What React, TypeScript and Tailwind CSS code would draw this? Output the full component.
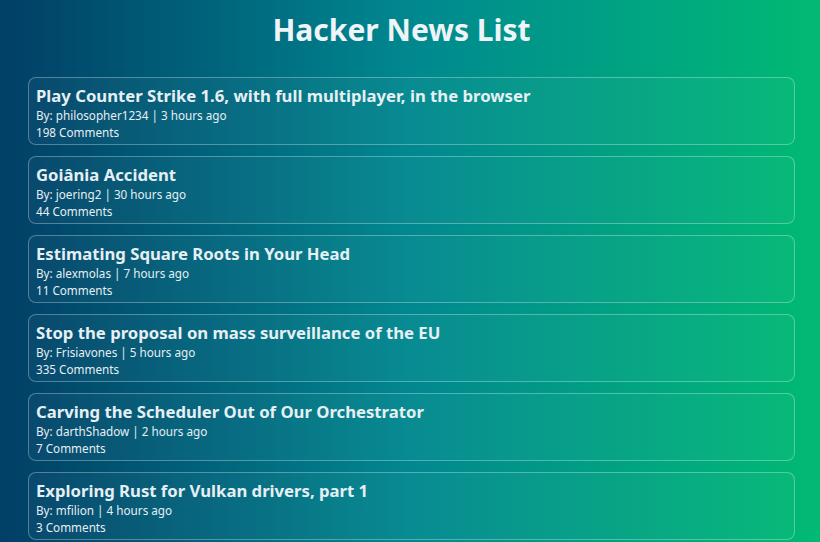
import React from 'react';

interface Story {
  title: string;
  by: string;
  time: string;
  comments: number;
}

const stories: Story[] = [
  { title: 'Play Counter Strike 1.6, with full multiplayer, in the browser', by: 'philosopher1234', time: '3 hours ago', comments: 198 },
  { title: 'Goiânia Accident', by: 'joering2', time: '30 hours ago', comments: 44 },
  { title: 'Estimating Square Roots in Your Head', by: 'alexmolas', time: '7 hours ago', comments: 11 },
  { title: 'Stop the proposal on mass surveillance of the EU', by: 'Frisiavones', time: '5 hours ago', comments: 335 },
  { title: 'Carving the Scheduler Out of Our Orchestrator', by: 'darthShadow', time: '2 hours ago', comments: 7 },
  { title: 'Exploring Rust for Vulkan drivers, part 1', by: 'mfilion', time: '4 hours ago', comments: 3 },
];

const App: React.FC = () => {
  return (
    <div
      className="min-h-screen bg-gradient-to-r from-[#023f66] via-[#01888f] to-[#02ba72] text-white pl-7 pr-[25px] pb-6"
      style={{ fontFamily: '"Noto Sans", "Open Sans", sans-serif' }}
    >
      <h1 className="pt-[11px] pr-[20px] text-[30px] leading-[38px] font-bold text-center text-[#eef4f7]">Hacker News List</h1>

      <ul className="mt-[28px] flex flex-col gap-[11px]">
        {stories.map((story, index) => (
          <li key={index} className="rounded-lg border border-white/30 bg-white/[0.03] px-[7px] pt-[7px] pb-[3px]">
            <h2 className="text-[16.7px] leading-[22px] font-bold text-[#e6eff4]">{story.title}</h2>
            <p className="text-[11.7px] leading-[17px] text-[#e6eff4]">By: {story.by} | {story.time}</p>
            <p className="text-[11.7px] leading-[17px] text-[#e6eff4]">{story.comments} Comments</p>
          </li>
        ))}
      </ul>
    </div>
  );
};

export default App;
